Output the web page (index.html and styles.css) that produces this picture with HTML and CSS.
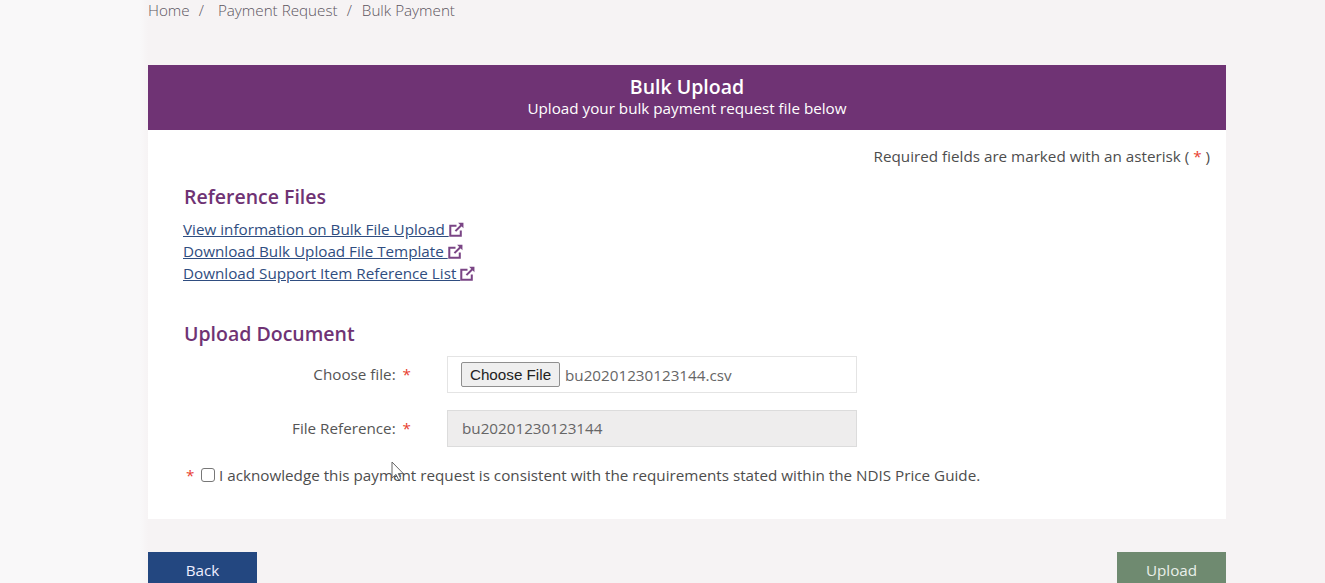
FILE: index.html
```html
<!DOCTYPE html>
<html lang="en">
<head>
<meta charset="utf-8">
<title>Bulk Upload</title>
<link rel="stylesheet" href="styles.css">
</head>
<body>
<div class="page">
  <nav class="crumbs">
    <span>Home</span><span class="sep1">/</span><span>Payment Request</span><span class="sep2">/</span><span class="cur">Bulk Payment</span>
  </nav>
  <section class="panel">
    <header class="head">
      <h1>Bulk Upload</h1>
      <p>Upload your bulk payment request file below</p>
    </header>
    <div class="body">
      <p class="req">Required fields are marked with an asterisk ( <span class="star">*</span> )</p>
      <h2 class="h-ref">Reference Files</h2>
      <ul class="links">
        <li><a href="#">View information on Bulk File Upload </a><svg class="ext" viewBox="0 0 14 14"><use href="#ext"/></svg></li>
        <li><a href="#">Download Bulk Upload File Template </a><svg class="ext" viewBox="0 0 14 14"><use href="#ext"/></svg></li>
        <li><a href="#">Download Support Item Reference List </a><svg class="ext" viewBox="0 0 14 14"><use href="#ext"/></svg></li>
      </ul>
      <h2 class="h-up">Upload Document</h2>
      <div class="row row-file">
        <label class="lbl">Choose file: <span class="star lbl-star">*</span></label>
        <div class="field"><button class="choose" type="button">Choose File</button><span class="fname">bu20201230123144.csv</span></div>
      </div>
      <div class="row row-ref">
        <label class="lbl">File Reference: <span class="star lbl-star">*</span></label>
        <div class="field field-off"><span class="ref-val">bu20201230123144</span></div>
      </div>
      <div class="ack">
        <span class="star">*</span><span class="box"></span><span>I acknowledge this payment request is consistent with the requirements stated within the NDIS Price Guide.</span>
      </div>
    </div>
  </section>
  <div class="actions">
    <button class="btn back" type="button">Back</button>
    <button class="btn up" type="button">Upload</button>
  </div>
</div>
<svg class="cursor" width="14" height="22" viewBox="0 0 14 22"><path d="M1 1v16l4-3.6 2.6 5.4 2.2-1-2.5-5.2h5z" fill="#fff" stroke="#666" stroke-width="1"/></svg>
<svg class="defs" width="0" height="0"><defs><g id="ext" fill="none" stroke="#7a4585" stroke-width="1.9"><path d="M7 3.5H1.2v9.3H11V8"/><path d="M6 8.5l6-6"/><path d="M8.5 .8h5v5z" fill="#7a4585" stroke="none"/></g></defs></svg>
</body>
</html>
```
FILE: styles.css
```css
* { box-sizing: border-box; }
html, body { margin: 0; height: 583px; overflow: hidden; }
body {
  background: linear-gradient(to right, #f9f8f9 0, #f9f8f9 140px, #f6f3f4 148px);
  font-family: "Open Sans", "Liberation Sans", sans-serif;
  color: #4d4d4d;
  font-size: 15.22px;
  position: relative;
}
.page { padding-left: 148px; width: 1226px; }
.crumbs {
  height: 65px;
  line-height: 20px;
  font-weight: 300;
  color: #5c5560;
  white-space: nowrap;
}
.sep1 { margin: 0 14px 0 9px; }
.sep2 { margin: 0 10px 0 9px; }
.panel { background: #fff; height: 454px; }
.head {
  background: #6f3374;
  color: #fff;
  height: 65px;
  text-align: center;
  padding-top: 10px;
}
.head h1 { margin: 0; font-size: 19.5px; line-height: 23px; font-weight: 600; }
.head p { margin: 0; font-size: 15.22px; line-height: 20px; }
.body { position: relative; height: 389px; padding: 16px 16px 0 36px; }
.req { margin: 0; text-align: right; line-height: 20px; }
.star { color: #e8402f; }
h2 { margin: 0; color: #6f3374; font-size: 19.5px; font-weight: 600; line-height: 24px; }
.h-ref { margin-top: 19px; }
.links { list-style: none; margin: 9px 0 0 -1px; padding: 0; }
.links li { display: flex; align-items: center; height: 22px; }
.links a { color: #2f4d80; text-decoration: underline; white-space: pre; }
.ext { width: 15px; height: 15px; }
.h-up { margin-top: 38px; }
.row { display: flex; align-items: center; }
.row-file { margin-top: 10px; }
.row-ref { margin-top: 17px; }
.lbl { width: 227px; padding-bottom: 2px; text-align: right; color: #555; white-space: pre; }
.lbl-star { margin-left: 3px; }
.field {
  width: 410px;
  height: 37px;
  margin-left: 36px;
  border: 1px solid #e4e4e4;
  display: flex;
  align-items: center;
  padding-left: 13px;
}
.choose {
  font-family: "Liberation Sans", sans-serif;
  font-size: 15.22px;
  height: 25px;
  width: 99px;
  padding: 0;
  background: #efefef;
  border: 1px solid #8f8f8f;
  border-radius: 2px;
  color: #222;
}
.fname { margin-left: 5px; color: #666; }
.field-off { background: #eeeded; color: #666; border-color: #dcdcdc; padding-left: 14px; }
.ref-val { padding-bottom: 2px; }
.ack { display: flex; align-items: center; margin: 16px 0 0 2px; height: 24px; white-space: nowrap; }
.ack .star { width: 15px; }
.box {
  width: 14px;
  height: 14px;
  border: 1px solid #777;
  border-radius: 3px;
  margin-right: 4px;
  background: #fff;
}
.actions { display: flex; justify-content: space-between; margin-top: 33px; }
.btn {
  width: 109px;
  height: 40px;
  border: 0;
  font: 15.22px "Open Sans", "Liberation Sans", sans-serif;
  padding: 0 0 4px;
}
.back { background: #234780; color: #eef; }
.up { background: #6f8a70; color: #e9efe9; }
.cursor { position: absolute; left: 391px; top: 461px; }
.defs { position: absolute; }
```
